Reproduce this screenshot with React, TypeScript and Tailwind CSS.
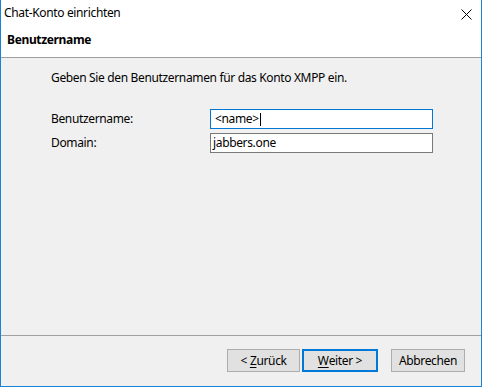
import React from "react";

const font = { fontFamily: '"Segoe UI", "Noto Sans", "Open Sans", sans-serif' };

export default function App() {
  return (
    <div
      className="w-[482px] h-[387px] flex flex-col bg-[#f0f0f0] border-x border-b border-[#1883d7] text-[12px] tracking-[-0.35px] text-black box-border overflow-hidden"
      style={font}
    >
      {/* title bar */}
      <div className="h-[30px] shrink-0 bg-white flex items-center justify-between pl-[3px] pr-[9px]">
        <span className="leading-[16px] -mt-[4px]">Chat-Konto einrichten</span>
        <svg width="11" height="11" viewBox="0 0 11 11" className="-mt-[2px]">
          <path d="M0.5 0.5 L10.5 10.5 M10.5 0.5 L0.5 10.5" stroke="#000" strokeWidth="1" />
        </svg>
      </div>
      {/* header */}
      <div className="h-[27px] shrink-0 bg-white flex items-start pl-[6px] border-b border-[#a0a0a0] box-content">
        <span className="font-bold leading-[16px] mt-[2px]">Benutzername</span>
      </div>
      {/* body */}
      <div className="flex-1 pl-[50px] pt-[12px] border-b border-[#a0a0a0]">
        <div className="leading-[16px] h-[16px]">
          Geben Sie den Benutzernamen für das Konto XMPP ein.
        </div>
        <div className="mt-[23px] flex flex-col gap-[4px]">
          <div className="flex items-center h-[20px]">
            <span className="w-[159px] leading-[16px]">Benutzername:</span>
            <div className="w-[223px] h-[20px] bg-white border border-[#0078d7] flex items-center pl-[4px] box-border">
              <span className="leading-[16px]">&lt;name&gt;</span>
              <span className="inline-block w-px h-[13px] bg-black ml-[1px]" />
            </div>
          </div>
          <div className="flex items-center h-[20px]">
            <span className="w-[159px] leading-[16px]">Domain:</span>
            <div className="w-[223px] h-[20px] bg-white border border-[#7a7a7a] flex items-center pl-[2px] box-border">
              <span className="leading-[16px]">jabbers.one</span>
            </div>
          </div>
        </div>
      </div>
      {/* footer */}
      <div className="h-[50px] shrink-0 flex items-start justify-end pr-[16px] pt-[13px]">
        <button className="w-[73px] h-[23px] bg-[#e1e1e1] border border-[#adadad] flex items-center justify-center leading-[16px] box-border">
          &lt; <u className="underline-offset-2 ml-[3px]">Z</u>urück
        </button>
        <button className="ml-[2px] w-[76px] h-[23px] bg-[#e1e1e1] border-2 border-[#0078d7] flex items-center justify-center leading-[16px] box-border">
          <u className="underline-offset-2">W</u>eiter &gt;
        </button>
        <button className="ml-[13px] w-[74px] h-[23px] bg-[#e1e1e1] border border-[#adadad] flex items-center justify-center leading-[16px] box-border">
          Abbrechen
        </button>
      </div>
    </div>
  );
}
